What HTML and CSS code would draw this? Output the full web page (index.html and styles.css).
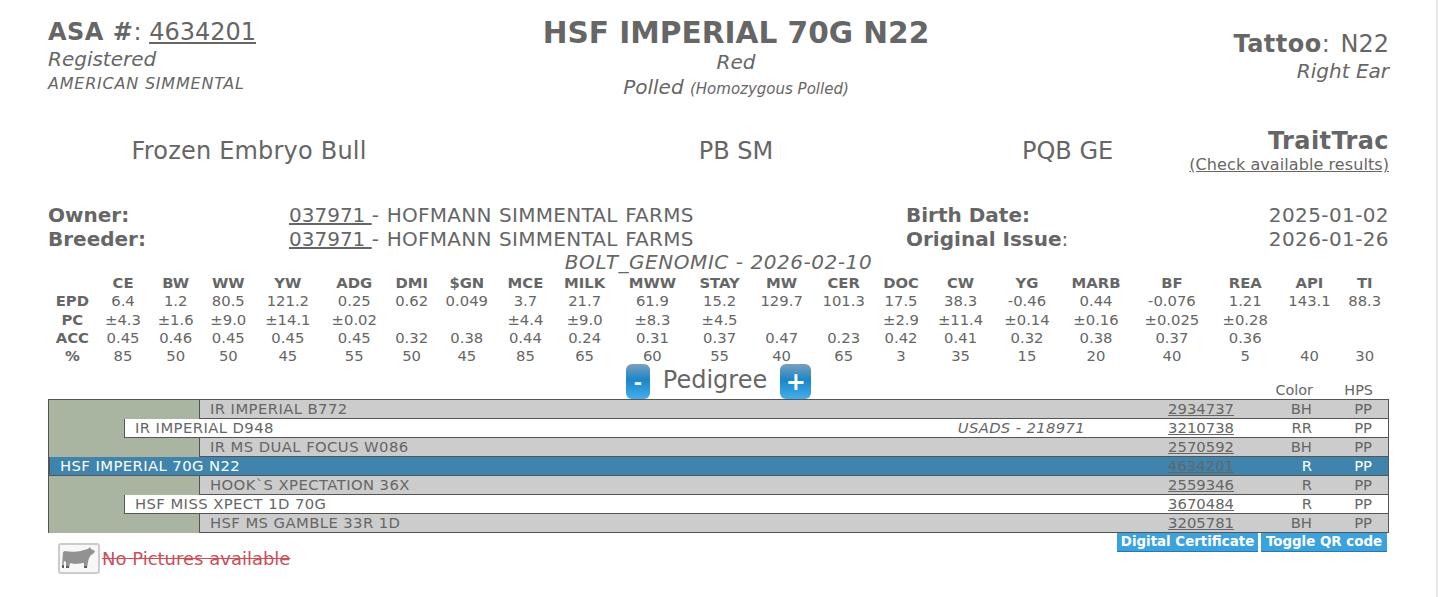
FILE: index.html
```html
<!DOCTYPE html>
<html lang="en">
<head>
  <meta charset="UTF-8" />
  <meta name="viewport" content="width=device-width, initial-scale=1.0" />
  <title>HSF IMPERIAL 70G N22</title>
  <link rel="stylesheet" href="styles.css">
</head>
<body>

  <div class="page">

    <div class="top-info">
      <div class="top-left">
        <div class="asa-line"><strong>ASA #</strong>: <a href="#">4634201</a></div>
        <div class="sub-line"><em>Registered</em></div>
        <div class="breed-line"><em>AMERICAN SIMMENTAL</em></div>
      </div>
      <div class="top-center">
        <h1>HSF IMPERIAL 70G N22</h1>
        <div class="sub-line"><em>Red</em></div>
        <div class="sub-line"><em>Polled <small>(Homozygous Polled)</small></em></div>
      </div>
      <div class="top-right">
        <div class="asa-line"><strong>Tattoo</strong>: N22</div>
        <div class="sub-line"><em>Right Ear</em></div>
      </div>
    </div>

    <div class="type-row">
      <div class="type-wide">Frozen Embryo Bull</div>
      <div>PB SM</div>
      <div>PQB GE</div>
      <div class="trait">
        <strong>TraitTrac</strong>
        <a href="#">(Check available results)</a>
      </div>
    </div>

    <div class="owner-row">
      <strong>Owner:</strong>
      <div><a href="#">037971 </a><span class="farm"> - HOFMANN SIMMENTAL FARMS</span></div>
      <strong>Birth Date:</strong>
      <div class="date">2025-01-02</div>
      <strong>Breeder:</strong>
      <div><a href="#">037971 </a><span class="farm"> - HOFMANN SIMMENTAL FARMS</span></div>
      <div><strong>Original Issue</strong>:</div>
      <div class="date">2026-01-26</div>
    </div>

    <div class="epd-title"><em>BOLT_GENOMIC - 2026-02-10</em></div>

    <table class="epd-table">
      <thead>
        <tr>
          <th></th><th>CE</th><th>BW</th><th>WW</th><th>YW</th><th>ADG</th><th>DMI</th><th>$GN</th><th class="wide">MCE</th><th class="wide">MILK</th><th class="wide">MWW</th><th class="wide">STAY</th><th>MW</th><th>CER</th><th>DOC</th><th>CW</th><th>YG</th><th>MARB</th><th>BF</th><th>REA</th><th>API</th><th>TI</th>
        </tr>
      </thead>
      <tbody>
        <tr>
          <th>EPD</th><td>6.4</td><td>1.2</td><td>80.5</td><td>121.2</td><td>0.25</td><td>0.62</td><td>0.049</td><td>3.7</td><td>21.7</td><td>61.9</td><td>15.2</td><td>129.7</td><td>101.3</td><td>17.5</td><td>38.3</td><td>-0.46</td><td>0.44</td><td>-0.076</td><td>1.21</td><td>143.1</td><td>88.3</td>
        </tr>
        <tr>
          <th>PC</th><td>±4.3</td><td>±1.6</td><td>±9.0</td><td>±14.1</td><td>±0.02</td><td></td><td></td><td>±4.4</td><td>±9.0</td><td>±8.3</td><td>±4.5</td><td></td><td></td><td>±2.9</td><td>±11.4</td><td>±0.14</td><td>±0.16</td><td>±0.025</td><td>±0.28</td><td></td><td></td>
        </tr>
        <tr>
          <th>ACC</th><td>0.45</td><td>0.46</td><td>0.45</td><td>0.45</td><td>0.45</td><td>0.32</td><td>0.38</td><td>0.44</td><td>0.24</td><td>0.31</td><td>0.37</td><td>0.47</td><td>0.23</td><td>0.42</td><td>0.41</td><td>0.32</td><td>0.38</td><td>0.37</td><td>0.36</td><td></td><td></td>
        </tr>
        <tr>
          <th>%</th><td>85</td><td>50</td><td>50</td><td>45</td><td>55</td><td>50</td><td>45</td><td>85</td><td>65</td><td>60</td><td>55</td><td>40</td><td>65</td><td>3</td><td>35</td><td>15</td><td>20</td><td>40</td><td>5</td><td>40</td><td>30</td>
        </tr>
      </tbody>
    </table>

    <div class="ped-head">
      <div class="ped-controls">
        <button class="ped-btn minus-btn">-</button>
        <span class="ped-label">Pedigree</span>
        <button class="ped-btn plus-btn">+</button>
      </div>
      <div class="ped-cols">
        <span class="col-color">Color</span>
        <span class="col-hps">HPS</span>
      </div>
    </div>

    <div class="pedigree">
      <div class="ped-row gen-2">
        <span class="ped-name">IR IMPERIAL B772</span>
        <a class="ped-reg" href="#">2934737</a>
        <span class="col-color">BH</span>
        <span class="col-hps">PP</span>
      </div>
      <div class="ped-row gen-1">
        <span class="ped-name">IR IMPERIAL D948</span>
        <em class="ped-note">USADS - 218971</em>
        <a class="ped-reg" href="#">3210738</a>
        <span class="col-color">RR</span>
        <span class="col-hps">PP</span>
      </div>
      <div class="ped-row gen-2">
        <span class="ped-name">IR MS DUAL FOCUS W086</span>
        <a class="ped-reg" href="#">2570592</a>
        <span class="col-color">BH</span>
        <span class="col-hps">PP</span>
      </div>
      <div class="ped-row gen-0">
        <span class="ped-name">HSF IMPERIAL 70G N22</span>
        <a class="ped-reg" href="#">4634201</a>
        <span class="col-color">R</span>
        <span class="col-hps">PP</span>
      </div>
      <div class="ped-row gen-2">
        <span class="ped-name">HOOK`S XPECTATION 36X</span>
        <a class="ped-reg" href="#">2559346</a>
        <span class="col-color">R</span>
        <span class="col-hps">PP</span>
      </div>
      <div class="ped-row gen-1">
        <span class="ped-name">HSF MISS XPECT 1D 70G</span>
        <a class="ped-reg" href="#">3670484</a>
        <span class="col-color">R</span>
        <span class="col-hps">PP</span>
      </div>
      <div class="ped-row gen-2">
        <span class="ped-name">HSF MS GAMBLE 33R 1D</span>
        <a class="ped-reg" href="#">3205781</a>
        <span class="col-color">BH</span>
        <span class="col-hps">PP</span>
      </div>
    </div>

    <div class="cert-row">
      <button class="cert-btn cert-digital">Digital Certificate</button>
      <button class="cert-btn cert-qr">Toggle QR code</button>
    </div>

    <div class="pictures">
      <span class="cow-box">
        <svg width="34" height="24" viewBox="0 0 34 24">
          <path fill="#929292" d="M1 5 L3 4 C8 5 14 5 19 4 C22 3 24 2 26 2 L28 0 L29 2 L33 4 L32 6 L29 8 L27 11 L26 15 L25 21 L22 21 L22 16 L13 17 L8 16 L7 21 L4 21 L4 15 L2 14 L1 21 L0 20 Z" />
          <path fill="#5f5f5f" d="M4 19 H7 V21 H4 Z M22 19 H25 V21 H22 Z M0 18 H2 V21 H0 Z" />
        </svg>
      </span>
      <span class="no-pics">No Pictures available</span>
    </div>

  </div>

</body>
</html>
```

FILE: styles.css
```css
body {
  font-family: "DejaVu Sans", Verdana, sans-serif;
  margin: 0;
  padding: 0;
  background-color: #fff;
  color: #666;
}

a {
  color: #666;
}

.page {
  height: 597px;
  padding: 0 47px 0 48px;
  border-right: 2px solid #e8e8e8;
  overflow: hidden;
}

.top-info {
  display: grid;
  grid-template-columns: 402px 572px 1fr;
  height: 112px;
  padding-top: 17px;
}

.asa-line {
  font-size: 24px;
  line-height: 30px;
}

.asa-line strong {
  letter-spacing: 0.5px;
}

.sub-line {
  font-size: 20px;
  line-height: 25px;
}

.breed-line {
  font-size: 16px;
  line-height: 24px;
  letter-spacing: 0.78px;
}

.top-center {
  text-align: center;
}

.top-center h1 {
  margin: 0;
  font-size: 29.6px;
  line-height: 33px;
}

.top-center small {
  font-size: 15px;
}

.top-right {
  text-align: right;
  padding-top: 12px;
}

.top-right .asa-line {
  word-spacing: 3px;
}

.type-row {
  display: grid;
  grid-template-columns: 402px 572px 90px 1fr;
  height: 62px;
  font-size: 24px;
  line-height: 30px;
  text-align: center;
  align-items: start;
  padding-top: 1px;
  box-sizing: border-box;
}

.type-row > div {
  margin-top: 6px;
  white-space: nowrap;
}

.type-row .type-wide {
  letter-spacing: 0.2px;
}

.type-row .trait {
  margin-top: -3px;
  text-align: right;
}

.trait strong {
  display: block;
  line-height: 28px;
  letter-spacing: 0.4px;
}

.trait a {
  display: block;
  font-size: 16px;
  line-height: 20px;
  letter-spacing: 0.08px;
}

.owner-row {
  display: grid;
  grid-template-columns: 241px 617px 1fr auto;
  font-size: 20px;
  line-height: 24px;
  margin-top: 12px;
}

.farm {
  letter-spacing: 0.27px;
  word-spacing: 0.8px;
}

.date {
  text-align: right;
  letter-spacing: 0.4px;
}

.epd-title {
  text-align: center;
  font-size: 20px;
  line-height: 22px;
  letter-spacing: 0.55px;
  margin-bottom: 1px;
}

.epd-table {
  width: 100%;
  border-collapse: collapse;
  font-size: 14.8px;
}

.epd-table th,
.epd-table td {
  padding: 0;
  height: 18.25px;
  line-height: 18px;
  text-align: center;
}

.epd-table th.wide {
  padding: 0 1px;
}

.ped-head {
  display: grid;
  grid-template-columns: 1fr auto 1fr;
  height: 35px;
  margin-top: -1px;
}

.ped-controls {
  grid-column: 2;
  display: flex;
  align-items: center;
  gap: 13px;
  font-size: 24px;
}

.ped-label {
  padding-bottom: 3px;
}

.ped-btn {
  height: 35px;
  padding: 0;
  border: none;
  border-radius: 6px;
  color: #fff;
  font-family: inherit;
  font-size: 24px;
  font-weight: bold;
  background: linear-gradient(#7c9fbc 0%, #1b86c8 45%, #45aeea 100%);
}

.minus-btn {
  width: 24px;
  font-size: 20px;
}

.plus-btn {
  width: 31px;
}

.ped-cols {
  grid-column: 3;
  display: flex;
  justify-content: flex-end;
  align-self: end;
  font-size: 14.4px;
  line-height: 18px;
}

.ped-cols .col-hps {
  margin-right: 16px;
}

.col-color {
  width: 78px;
  text-align: right;
}

.col-hps {
  width: 60px;
  text-align: right;
}

.pedigree {
  border: 1px solid #555;
  border-bottom-width: 0;
  background-color: #a9b5a0;
  font-size: 14.8px;
}

.ped-row {
  display: flex;
  height: 18px;
  line-height: 18px;
  padding-right: 16px;
  border-bottom: 1px solid #555;
  border-left: 1px solid #555;
  background-color: #ccc;
}

.gen-2 {
  margin-left: 150px;
}

.gen-1 {
  margin-left: 75px;
  background-color: #fff;
}

.gen-0 {
  margin-left: 0;
  background-color: #3e84ac;
  color: #fff;
}

.ped-name {
  flex: 1;
  padding-left: 10px;
  letter-spacing: 0.42px;
}

.ped-note {
  margin-right: 83px;
  letter-spacing: 0.35px;
}

.ped-reg {
  width: 66px;
  text-align: right;
}

.cert-row {
  display: flex;
  justify-content: flex-end;
  gap: 3px;
  padding-right: 2px;
}

.cert-btn {
  height: 19px;
  padding: 0;
  border: none;
  border-bottom: 1px solid #2a78a8;
  background-color: #3ba2de;
  color: #fff;
  font-family: inherit;
  font-size: 13.4px;
  font-weight: bold;
  line-height: 18px;
}

.cert-digital {
  width: 141px;
}

.cert-qr {
  width: 126px;
}

.pictures {
  display: flex;
  align-items: center;
  gap: 2px;
  margin-left: 10px;
  margin-top: -9px;
}

.cow-box {
  display: flex;
  align-items: center;
  justify-content: center;
  box-sizing: border-box;
  width: 42px;
  height: 31px;
  border: 2px solid #ccc;
  border-radius: 3px;
  background-color: #f7f7f7;
}

.no-pics {
  font-size: 18px;
  color: #c9505a;
  text-decoration: line-through;
}
```
